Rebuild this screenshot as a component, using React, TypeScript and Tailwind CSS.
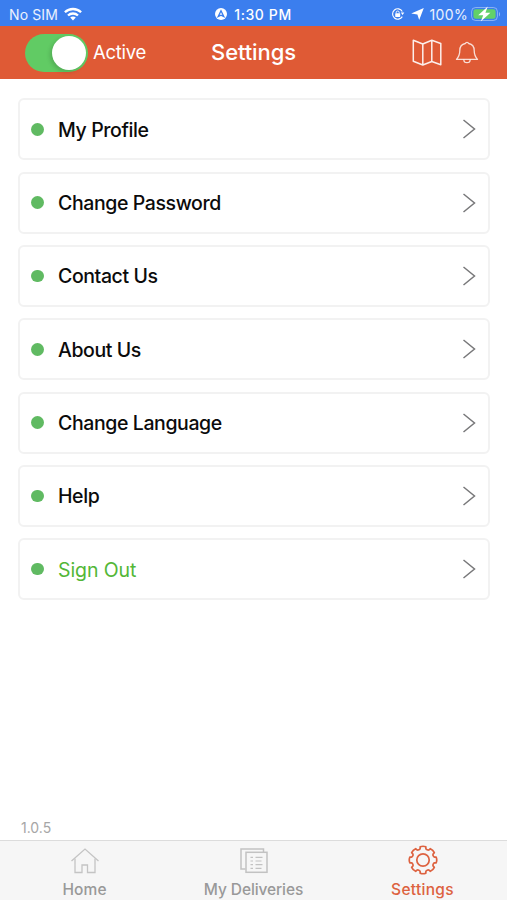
import clsx from "clsx";

type MenuItem = { label: string; accent?: boolean };

const MENU: MenuItem[] = [
  { label: "My Profile" },
  { label: "Change Password" },
  { label: "Contact Us" },
  { label: "About Us" },
  { label: "Change Language" },
  { label: "Help" },
  { label: "Sign Out", accent: true },
];

function WifiIcon() {
  return (
    <svg width="18" height="14" viewBox="0 0 18 14" fill="none" stroke="white" strokeWidth="2.3">
      <path d="M0.9 5.3C5.4 0.9 12.6 0.9 17.1 5.3" />
      <path d="M4 8.5C6.8 5.8 11.2 5.8 14 8.5" />
      <path d="M9 13.4L6.2 10.6C7.8 9.1 10.2 9.1 11.8 10.6Z" fill="white" stroke="none" />
    </svg>
  );
}

function BatteryIcon() {
  return (
    <svg width="30" height="16" viewBox="0 0 30 16" fill="none">
      <rect x="0.6" y="1.5" width="25.8" height="13" rx="4" stroke="white" strokeOpacity="0.4" />
      <rect x="2.4" y="3.3" width="22.2" height="9.4" rx="2.3" fill="#62d168" />
      <path d="M28 6v4.4c1.4-.6 1.4-3.8 0-4.4z" fill="white" fillOpacity="0.45" />
      <path d="M16.8 0.6L7.2 9.2h5l-2.4 6.4 9.6-8.8h-5z" fill="white" />
    </svg>
  );
}

function StatusBar() {
  return (
    <div className="grid h-[26px] grid-cols-3 items-center bg-[#3b7eee] pt-[2px] text-[14px] text-white">
      <div className="flex items-center gap-[6px] pl-[9px]">
        <span className="tracking-[0.12px] text-white/90">No SIM</span>
        <WifiIcon />
      </div>
      <div className="flex items-center justify-center gap-[7px]">
        <svg width="12" height="12" viewBox="0 0 12 12">
          <circle cx="6" cy="6" r="6" fill="white" />
          <path d="M3.2 8.6L6 2.8l2.8 5.8L6 7.2z" fill="none" stroke="#3b7eee" strokeWidth="1.3" />
        </svg>
        <span className="font-medium tracking-[0.6px]">1:30 PM</span>
      </div>
      <div className="flex items-center justify-end pr-[6px]">
        <svg width="14" height="12" viewBox="0 0 14 12" fill="none" stroke="white">
          <path d="M11.3 8.6A5.2 5.2 0 1 1 11.3 3.4" strokeWidth="1.1" />
          <path d="M9.8 4.6h3.5L11.6 7z" fill="white" stroke="none" />
          <rect x="4.2" y="5.2" width="5" height="3.7" rx="0.6" fill="white" stroke="none" />
          <path d="M5.2 5.4V4.5a1.5 1.5 0 0 1 3 0v.9" strokeWidth="0.9" />
        </svg>
        <svg className="ml-[6px]" width="13" height="12" viewBox="0 0 13 12">
          <path d="M12.8 0L8.2 12 6.4 6.6 0.2 5.4z" fill="white" />
        </svg>
        <span className="ml-[5px] mr-[3px] tracking-[0.35px] text-white/90">100%</span>
        <BatteryIcon />
      </div>
    </div>
  );
}

function Header() {
  return (
    <header className="grid h-[53px] grid-cols-3 items-center bg-[#df5a35] text-white">
      <div className="flex items-center gap-[5px] pl-[25px]">
        <div className="flex h-[38px] w-[63px] shrink-0 items-center justify-end rounded-full bg-[#61cb64] pr-[2px]">
          <div className="h-[34px] w-[34px] rounded-full bg-white shadow-[-2px_2px_4px_rgba(0,0,0,0.15)]" />
        </div>
        <span className="text-[18.5px] tracking-[-0.3px]">Active</span>
      </div>
      <h1 className="text-center text-[22px] font-medium tracking-[-0.1px]">Settings</h1>
      <div className="flex items-center justify-end gap-[13px] pr-[28px]">
        <svg width="30" height="28" viewBox="0 0 30 28" fill="none" stroke="white" strokeOpacity="0.9" strokeWidth="1.5">
          <path
            d="M1.3 1.3l9.5 3.7 9-3.7 9 3.2v21.2l-9-3.2-9 3.5-9.5-3.7zM10.8 5v21M19.8 1.3v21.2"
            strokeLinejoin="round"
          />
        </svg>
        <svg width="24" height="24" viewBox="0 0 24 24" fill="none" stroke="white" strokeOpacity="0.8" strokeWidth="1.3">
          <path
            d="M10.3 2.5a1.8 1.8 0 0 1 3.4 0c3.8.8 5.5 3.3 5.5 7 0 4.8 1 6.3 3.3 8.900H1.5c2.3-2.600 3.300-4.100 3.300-8.900 0-3.700 1.700-6.200 5.500-7z"
            strokeLinejoin="round"
          />
          <path d="M8.8 18.4a3.2 3.2 0 0 0 6.4 0" />
        </svg>
      </div>
    </header>
  );
}

function MenuRow({ label, accent }: MenuItem) {
  return (
    <li className="flex h-[62px] items-center rounded-[6px] border-2 border-[#f2f2f2] bg-white pl-[11px] pr-[12px]">
      <span className="h-[12.5px] w-[12.5px] rounded-full bg-[#60ba62]" />
      <span
        className={clsx(
          "ml-[14.5px] flex-1 pt-[2px] text-[19.5px]",
          accent
            ? "tracking-[-0.1px] text-[#53b737]"
            : "font-medium tracking-[-0.4px] text-[#0b0b0b]",
        )}
      >
        {label}
      </span>
      <svg width="14" height="20" viewBox="0 0 14 20" fill="none" stroke="#78787a" strokeWidth="1.5">
        <path d="M1.5 1L12.5 10 1.5 19" />
      </svg>
    </li>
  );
}

function HomeIcon() {
  return (
    <svg width="30" height="28" viewBox="0 0 30 28" fill="none" stroke="#c4c4c4" strokeWidth="1.3">
      <path d="M1.5 14L15 2l13.5 12" />
      <path d="M5 11.5V25.5h7V18h5.5v7.5H25V11.5" />
    </svg>
  );
}

function DeliveriesIcon() {
  return (
    <svg width="30" height="28" viewBox="0 0 30 28" fill="none" stroke="#c2c2c2" strokeWidth="1.5">
      <path d="M6.5 22H2V2h22.5v3" />
      <rect x="7" y="5.3" width="21" height="20" />
      <path
        d="M11.5 10.3h2.5M11.5 14h2.5M11.5 17.7h2.5M11.5 21.4h2.5M16.5 10.3h7M16.5 14h6M16.5 17.7h7M16.5 21.4h6"
        strokeWidth="1.2"
      />
    </svg>
  );
}

// One tooth spans 45 degrees, repeated eight times around the hub
function gearPath() {
  const at = (r: number, deg: number) => {
    const a = (deg * Math.PI) / 180;
    return `${(15 + r * Math.sin(a)).toFixed(2)} ${(15 - r * Math.cos(a)).toFixed(2)}`;
  };
  let d = `M${at(13.5, -12)}`;
  for (let k = 0; k < 8; k++) {
    const c = k * 45;
    d += `Q${at(14.3, c)} ${at(13.5, c + 12)}`;
    d += `L${at(11.9, c + 14)}`;
    d += `C${at(10.8, c + 17)} ${at(10.8, c + 28)} ${at(11.9, c + 31)}`;
    d += `L${at(13.5, c + 33)}`;
  }
  return d + "Z";
}

function GearIcon() {
  return (
    <svg width="30" height="30" viewBox="0 0 30 30" fill="none" stroke="#dd6240" strokeWidth="1.7">
      <path d={gearPath()} strokeLinejoin="round" />
      <circle cx="15" cy="15" r="6.2" />
    </svg>
  );
}

function TabBar() {
  return (
    <nav className="grid h-[60px] grid-cols-3 border-t border-[#dcdcdc] bg-[#f6f6f6] text-[15.5px] font-medium text-[#999999]">
      <div className="flex flex-col items-center">
        <div className="flex h-[39px] items-center">
          <HomeIcon />
        </div>
        <span className="leading-[20px] tracking-[0.1px]">Home</span>
      </div>
      <div className="flex flex-col items-center">
        <div className="flex h-[39px] items-center">
          <DeliveriesIcon />
        </div>
        <span className="leading-[20px] tracking-[-0.1px]">My Deliveries</span>
      </div>
      <div className="flex flex-col items-center text-[#dd6240]">
        <div className="flex h-[38px] items-center">
          <GearIcon />
        </div>
        <span className="mt-px leading-[20px] tracking-[0.3px]">Settings</span>
      </div>
    </nav>
  );
}

export default function App() {
  return (
    <div className="flex h-[900px] w-[507px] flex-col overflow-hidden bg-white font-['Inter',sans-serif]">
      <StatusBar />
      <Header />
      <main className="flex flex-1 flex-col pl-[18px] pr-[17px] pt-[19.4px]">
        <ul className="flex flex-col gap-[11.3px]">
          {MENU.map((item) => (
            <MenuRow key={item.label} {...item} />
          ))}
        </ul>
        <p className="mt-auto pb-[2px] pl-[3px] text-[14px] leading-[20px] text-[#a6a6a6]">1.0.5</p>
      </main>
      <TabBar />
    </div>
  );
}
